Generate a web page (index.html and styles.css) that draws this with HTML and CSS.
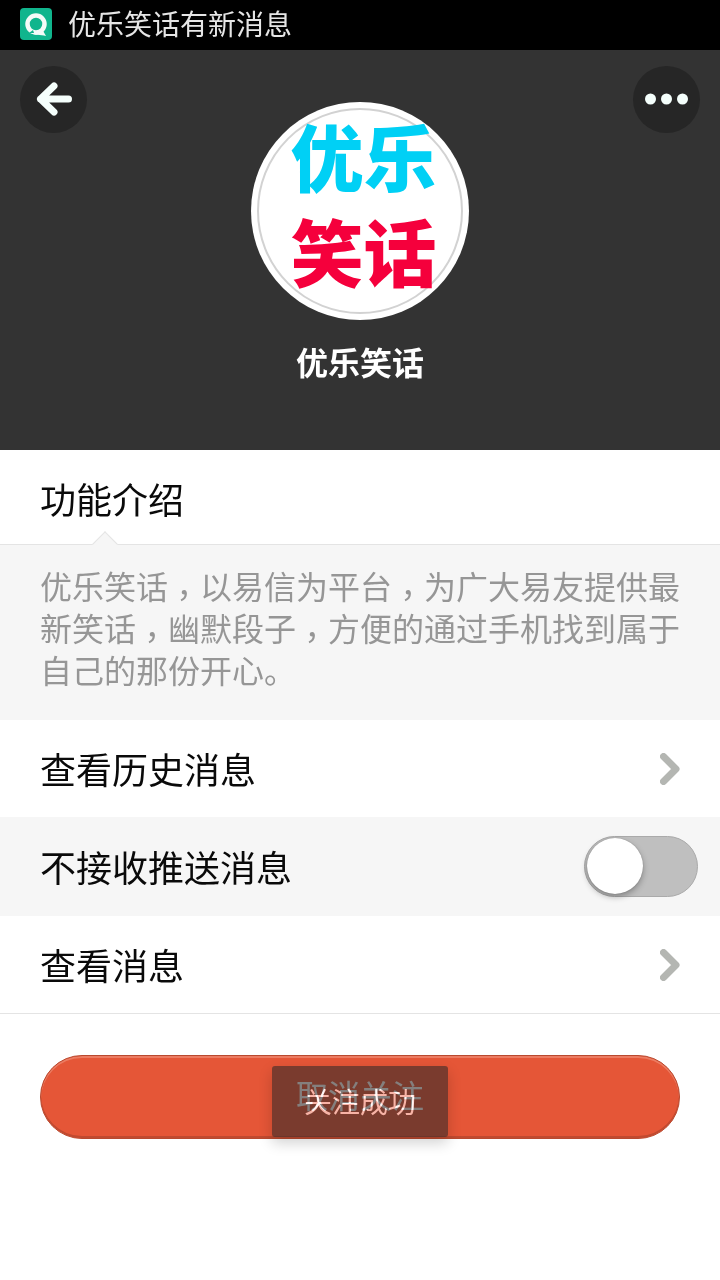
FILE: index.html
```html
<!DOCTYPE html>
<html lang="zh-CN">
<head>
<meta charset="utf-8">
<title>优乐笑话</title>
<link rel="stylesheet" href="styles.css">
</head>
<body>
<div class="statusbar">
  <svg class="app-icon" viewBox="0 0 32 32" aria-hidden="true">
    <rect width="32" height="32" rx="4" fill="#10b58d"/>
    <circle cx="16" cy="16" r="8.500" fill="none" stroke="#f4fbf8" stroke-width="4.500"/>
    <path d="M11 25 C15 27.500 20 26.500 26 28 L22 21 Z" fill="#f4fbf8"/>
    <path d="M9 25 L13 22 L14 25 Z" fill="#10b58d"/>
  </svg>
  <span class="status-text">优乐笑话有新消息</span>
</div>

<header class="profile">
  <button class="round-btn">
    <svg class="round-icon" viewBox="0 0 67 67" aria-hidden="true">
      <path d="M20.500 33 H48.500 M34 20 L20.500 33 L34 46" fill="none" stroke="#f5fffc" stroke-width="7" stroke-linecap="round" stroke-linejoin="round"/>
    </svg>
  </button>
  <div class="identity">
    <div class="logo">
      <div class="logo-ring">
        <span class="logo-line logo-cyan">优乐</span>
        <span class="logo-line logo-red">笑话</span>
      </div>
    </div>
    <div class="name">优乐笑话</div>
  </div>
  <button class="round-btn round-btn-end">
    <svg class="round-icon" viewBox="0 0 67 67" aria-hidden="true">
      <circle cx="17.500" cy="33" r="5.500" fill="#f5fffc"/>
      <circle cx="33.500" cy="33" r="5.500" fill="#f5fffc"/>
      <circle cx="49.500" cy="33" r="5.500" fill="#f5fffc"/>
    </svg>
  </button>
</header>

<section class="intro-head">功能介绍</section>
<section class="intro-body">优乐笑话<span class="comma" lang="zh-TW">，</span>以易信为平台<span class="comma" lang="zh-TW">，</span>为广大易友提供最新笑话<span class="comma" lang="zh-TW">，</span>幽默段子<span class="comma" lang="zh-TW">，</span>方便的通过手机找到属于自己的那份开心。</section>

<div class="row row-history">
  <span class="row-label">查看历史消息</span>
  <svg class="chevron" viewBox="0 0 20 32" aria-hidden="true"><path d="M3.500 3.500 L16 16 L3.500 28.500" fill="none" stroke="#b4b6b2" stroke-width="7" stroke-linecap="round" stroke-linejoin="round"/></svg>
</div>
<div class="row row-push">
  <span class="row-label">不接收推送消息</span>
  <div class="switch"><div class="knob"></div></div>
</div>
<div class="row row-view">
  <span class="row-label">查看消息</span>
  <svg class="chevron" viewBox="0 0 20 32" aria-hidden="true"><path d="M3.500 3.500 L16 16 L3.500 28.500" fill="none" stroke="#b4b6b2" stroke-width="7" stroke-linecap="round" stroke-linejoin="round"/></svg>
</div>

<div class="action">
  <button class="unfollow">取消关注</button>
  <div class="toast"><span class="toast-text">关注成功</span></div>
</div>
</body>
</html>
```

FILE: styles.css
```css
* { box-sizing: border-box; }
html, body { margin: 0; padding: 0; }
body {
  width: 720px;
  height: 1280px;
  overflow: hidden;
  background: #fff;
  font-family: "Noto Sans CJK SC", "Noto Sans", sans-serif;
  color: #0a0a0a;
}
.statusbar {
  height: 50px;
  background: #000;
  display: flex;
  align-items: center;
  padding: 0 0 3px 20px;
  gap: 16px;
}
.app-icon { width: 32px; height: 32px; display: block; }
.status-text { color: #e6e6e6; font-size: 28px; line-height: 40px; padding-bottom: 2px; }

.profile {
  height: 400px;
  background: #333;
  display: grid;
  grid-template-columns: 1fr auto 1fr;
  align-items: start;
  padding: 16px 20px 0;
}
.round-btn {
  width: 67px;
  height: 67px;
  border: 0;
  padding: 0;
  border-radius: 50%;
  background: #262626;
  display: block;
}
.round-btn-end { justify-self: end; }
.round-icon { width: 67px; height: 67px; display: block; }
.identity {
  display: flex;
  flex-direction: column;
  align-items: center;
  padding-top: 36px;
}
.logo {
  width: 218px;
  height: 218px;
  border-radius: 50%;
  background: #fff;
  padding: 6px;
}
.logo-ring {
  width: 206px;
  height: 206px;
  border-radius: 50%;
  border: 2px solid #d2d2d2;
  display: flex;
  flex-direction: column;
  align-items: center;
  padding-left: 7px;
}
.logo-line {
  display: block;
  font-size: 73px;
  font-weight: 900;
  line-height: 94px;
  white-space: nowrap;
}
.logo-cyan { color: #00d0f5; margin-top: -3px; }
.logo-red { color: #f5003c; margin-top: 1px; }
.name {
  margin-top: 18px;
  color: #fff;
  font-size: 32px;
  font-weight: 700;
  line-height: 46px;
}

.intro-head {
  height: 95px;
  padding: 0 40px;
  font-size: 36px;
  line-height: 96px;
  background: #fff;
  border-bottom: 1px solid #e4e4e4;
  position: relative;
}
.intro-head::after {
  content: "";
  position: absolute;
  left: 96px;
  bottom: 0;
  width: 17px;
  height: 17px;
  transform: translateY(50%) rotate(45deg);
  background: #f6f6f6;
  border: 1px solid #e4e4e4;
  border-right: 0;
  border-bottom: 0;
}
.intro-body {
  height: 175px;
  padding: 19px 36px 0 40px;
  background: #f6f6f6;
  color: #969696;
  font-size: 32px;
  line-height: 42px;
}
.comma {
  font-family: "Noto Sans CJK TC", sans-serif;
  text-spacing-trim: space-all;
  line-height: 0;
  vertical-align: -.26em;
}

.row {
  display: flex;
  align-items: center;
  justify-content: space-between;
  font-size: 36px;
  padding: 0 40px;
}
.row-label { padding-bottom: 2px; }
.row-history { height: 97px; background: #fff; }
.row-push { height: 99px; background: #f6f6f6; padding-right: 22px; }
.row-view { height: 98px; background: #fff; border-bottom: 1px solid #e4e4e4; }
.chevron { width: 20px; height: 32px; display: block; }

.switch {
  width: 114px;
  height: 61px;
  border-radius: 31px;
  background: #bfbfbf;
  border: 1px solid #aaa;
  padding: 1px 2px;
}
.knob {
  width: 56px;
  height: 56px;
  border-radius: 50%;
  background: #fff;
  box-shadow: 0 3px 6px rgba(0, 0, 0, .3), 0 0 1px rgba(0, 0, 0, .35);
}

.action {
  padding: 41px 40px 0;
  position: relative;
}
.unfollow {
  display: block;
  width: 640px;
  height: 84px;
  border: 1px solid #b9492f;
  border-radius: 42px;
  background: #e55637;
  box-shadow: inset 0 2px 0 #ec7c62, inset 0 -2px 0 #c04a30;
  color: #fff;
  font-family: inherit;
  font-size: 32px;
  line-height: 46px;
  padding: 0 0 6px;
}
.toast {
  position: absolute;
  left: 272px;
  top: 52px;
  width: 176px;
  height: 71px;
  border-radius: 3px;
  background: rgba(50, 41, 40, .6);
  box-shadow: 0 6px 14px rgba(0, 0, 0, .18);
  font-size: 28px;
  line-height: 71px;
  text-align: center;
}
.toast-text {
  color: rgb(125, 120, 120);
  mix-blend-mode: plus-lighter;
}
```
